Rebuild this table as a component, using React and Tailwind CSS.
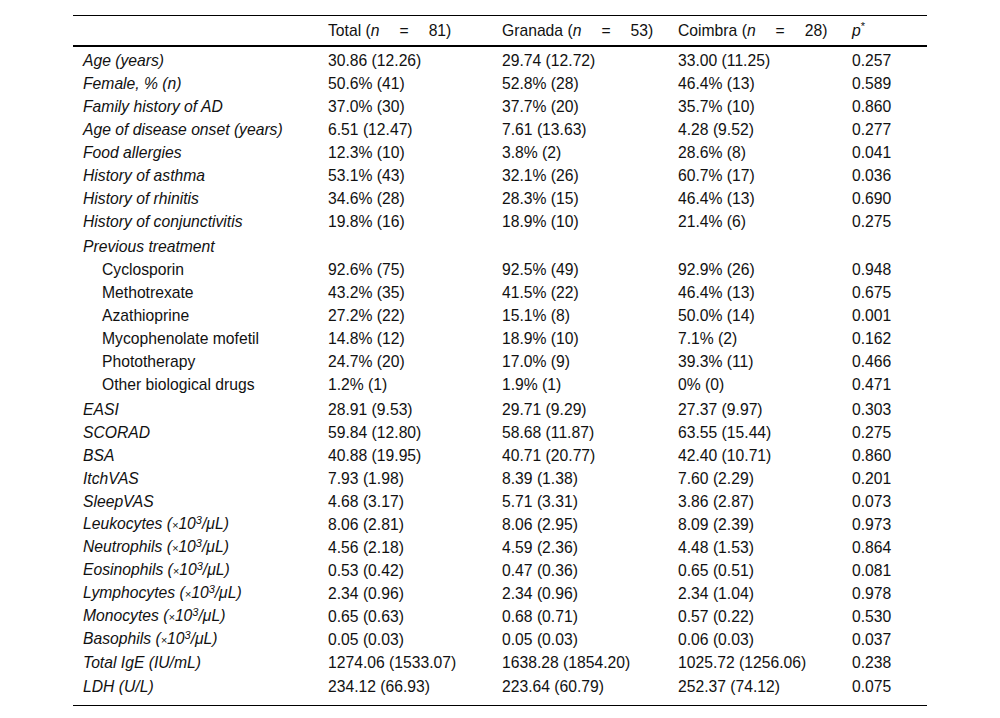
const rows = [
  { label: "Age (years)", v: ["30.86 (12.26)", "29.74 (12.72)", "33.00 (11.25)", "0.257"] },
  { label: "Female, % (n)", v: ["50.6% (41)", "52.8% (28)", "46.4% (13)", "0.589"] },
  { label: "Family history of AD", v: ["37.0% (30)", "37.7% (20)", "35.7% (10)", "0.860"] },
  { label: "Age of disease onset (years)", v: ["6.51 (12.47)", "7.61 (13.63)", "4.28 (9.52)", "0.277"] },
  { label: "Food allergies", v: ["12.3% (10)", "3.8% (2)", "28.6% (8)", "0.041"] },
  { label: "History of asthma", v: ["53.1% (43)", "32.1% (26)", "60.7% (17)", "0.036"] },
  { label: "History of rhinitis", v: ["34.6% (28)", "28.3% (15)", "46.4% (13)", "0.690"] },
  { label: "History of conjunctivitis", v: ["19.8% (16)", "18.9% (10)", "21.4% (6)", "0.275"] },
  { label: "Previous treatment", v: ["", "", "", ""], tall: true },
  { label: "Cyclosporin", sub: true, v: ["92.6% (75)", "92.5% (49)", "92.9% (26)", "0.948"] },
  { label: "Methotrexate", sub: true, v: ["43.2% (35)", "41.5% (22)", "46.4% (13)", "0.675"] },
  { label: "Azathioprine", sub: true, v: ["27.2% (22)", "15.1% (8)", "50.0% (14)", "0.001"] },
  { label: "Mycophenolate mofetil", sub: true, v: ["14.8% (12)", "18.9% (10)", "7.1% (2)", "0.162"] },
  { label: "Phototherapy", sub: true, v: ["24.7% (20)", "17.0% (9)", "39.3% (11)", "0.466"] },
  { label: "Other biological drugs", sub: true, v: ["1.2% (1)", "1.9% (1)", "0% (0)", "0.471"] },
  { label: "EASI", v: ["28.91 (9.53)", "29.71 (9.29)", "27.37 (9.97)", "0.303"], tall: true },
  { label: "SCORAD", v: ["59.84 (12.80)", "58.68 (11.87)", "63.55 (15.44)", "0.275"] },
  { label: "BSA", v: ["40.88 (19.95)", "40.71 (20.77)", "42.40 (10.71)", "0.860"] },
  { label: "ItchVAS", v: ["7.93 (1.98)", "8.39 (1.38)", "7.60 (2.29)", "0.201"] },
  { label: "SleepVAS", v: ["4.68 (3.17)", "5.71 (3.31)", "3.86 (2.87)", "0.073"] },
  { cell: "Leukocytes", v: ["8.06 (2.81)", "8.06 (2.95)", "8.09 (2.39)", "0.973"] },
  { cell: "Neutrophils", v: ["4.56 (2.18)", "4.59 (2.36)", "4.48 (1.53)", "0.864"] },
  { cell: "Eosinophils", v: ["0.53 (0.42)", "0.47 (0.36)", "0.65 (0.51)", "0.081"] },
  { cell: "Lymphocytes", v: ["2.34 (0.96)", "2.34 (0.96)", "2.34 (1.04)", "0.978"] },
  { cell: "Monocytes", v: ["0.65 (0.63)", "0.68 (0.71)", "0.57 (0.22)", "0.530"] },
  { cell: "Basophils", v: ["0.05 (0.03)", "0.05 (0.03)", "0.06 (0.03)", "0.037"] },
  { label: "Total IgE (IU/mL)", v: ["1274.06 (1533.07)", "1638.28 (1854.20)", "1025.72 (1256.06)", "0.238"] },
  { label: "LDH (U/L)", v: ["234.12 (66.93)", "223.64 (60.79)", "252.37 (74.12)", "0.075"], last: true },
];

const grid = "grid grid-cols-[245px_174px_176px_174px_1fr] px-[10px]";

function Label({ r }) {
  if (r.cell) {
    return (
      <span className="italic">
        {r.cell} (<span className="text-[11px]">×</span>10
        <sup className="text-[11px]">3</sup>/μL)
      </span>
    );
  }
  if (r.sub) return <span className="pl-[19px]">{r.label}</span>;
  return <span className="italic">{r.label}</span>;
}

function Head({ name, n }) {
  return (
    <div>
      {name} (<span className="italic">n</span>
      <span className="ml-[20px] mr-[20px]">=</span>
      {n})
    </div>
  );
}

export default function App() {
  return (
    <div
      className="w-[1000px] h-[718px] bg-white text-[#111] text-[15.7px] leading-[18px] pt-[15px]"
      style={{ fontFamily: '"Liberation Sans", Arial, sans-serif' }}
    >
      <div className="mx-[73px] w-[854px] border-t border-b border-black">
        <div className={`${grid} h-[31px] items-center border-b-2 border-black`}>
          <div />
          <Head name="Total" n="81" />
          <Head name="Granada" n="53" />
          <Head name="Coimbra" n="28" />
          <div>
            <span className="italic">p</span>
            <sup className="text-[11px]">*</sup>
          </div>
        </div>
        <div className="pt-[2px] pb-[7px]">
          {rows.map((r, i) => (
            <div
              key={i}
              className={`${grid} items-center ${r.tall ? "h-[25px] pt-[2px]" : "h-[23px]"} ${
                r.last ? "mt-[1px]" : ""
              }`}
            >
              <div>
                <Label r={r} />
              </div>
              {r.v.map((x, j) => (
                <div key={j}>{x}</div>
              ))}
            </div>
          ))}
        </div>
      </div>
    </div>
  );
}
